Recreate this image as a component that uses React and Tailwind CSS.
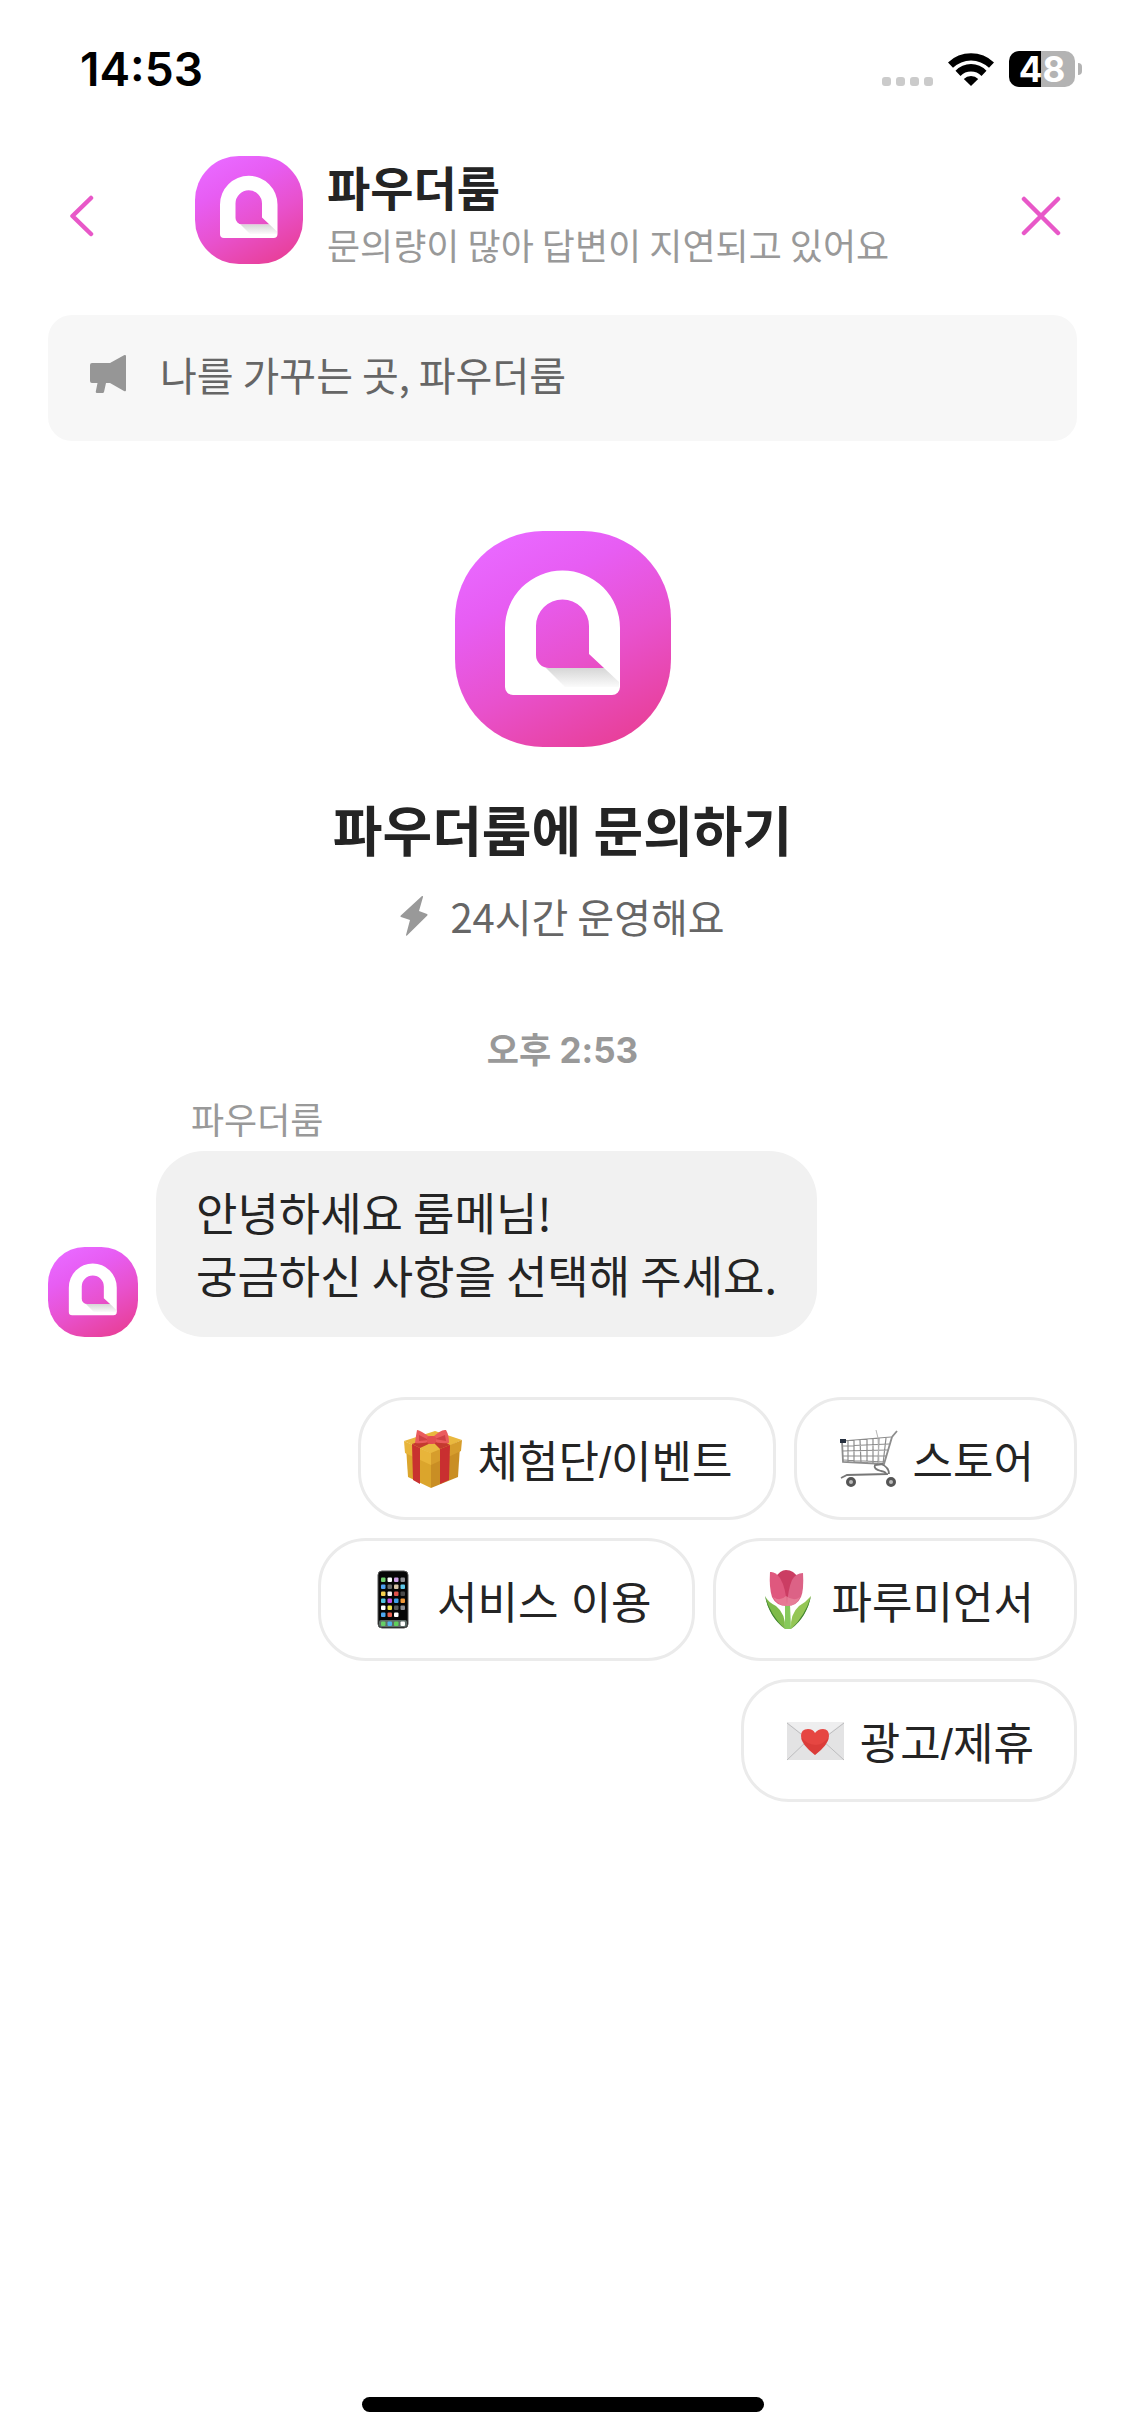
import { useId } from 'react';

const PHONE_APPS = [
  ['#6fcf6b', '#ffffff', '#cf9fe6', '#8e8e93'],
  ['#4f9ff0', '#6b6b6b', '#d8c3a5', '#5fc8e8'],
  ['#f5d04e', '#f2f2f2', '#e0524a', '#4a4a4a'],
  ['#4fc3e0', '#c04fe0', '#3f9fe8', '#f0983a'],
  ['#ffffff', '#f0e04a', '#5a5a5a', '#8e8e93'],
  ['#4fa8f0', '#e8604f', '#ffffff'],
];

const DOCK_APPS = ['#66cf66', '#4fb0ec', '#5fd05a', '#ffffff'];

function Logo({ className }) {
  const id = useId();

  return (
    <svg viewBox="0 0 216 216" className={className} aria-hidden="true">
      <defs>
        <linearGradient id={`${id}-bg`} x1="0.25" y1="0.02" x2="0.75" y2="1">
          <stop offset="0" stopColor="#e968ff" />
          <stop offset="0.25" stopColor="#e75df3" />
          <stop offset="0.6" stopColor="#e851cd" />
          <stop offset="1" stopColor="#e83f98" />
        </linearGradient>
        <linearGradient id={`${id}-shade`} x1="0" y1="0" x2="0" y2="1">
          <stop offset="0" stopColor="#d6d6d6" />
          <stop offset="1" stopColor="#fbfbfb" />
        </linearGradient>
      </defs>
      <rect width="216" height="216" rx="88" fill={`url(#${id}-bg)`} />
      <path
        fill="#fff"
        fillRule="evenodd"
        d="M50 97a57.500 57.500 0 0 1 115 0v59a8 8 0 0 1-8 8H58a8 8 0 0 1-8-8zM81 95v29a13 13 0 0 0 13 13h55l-15-14V95a26.500 26.500 0 0 0-53 0z"
      />
      <path fill={`url(#${id}-shade)`} d="M91 137h58l15 14v5H110z" />
    </svg>
  );
}

function WifiIcon() {
  return (
    <svg viewBox="0 0 46 33" className="h-[33px] w-[46px]" aria-hidden="true">
      <path d="M0 9.500a33 33 0 0 1 46 0l-5 5.300a26 26 0 0 0-36 0z" />
      <path d="M7.500 17.700a21.500 21.500 0 0 1 31 0l-5 5.300a14.600 14.600 0 0 0-21 0z" />
      <path d="M15.800 26a10 10 0 0 1 14.400 0L23 33z" />
    </svg>
  );
}

function StatusBar() {
  return (
    <div className="flex items-center justify-between pt-11 pr-[43px] pl-20">
      <span className="text-[46px] leading-[50px] font-semibold text-black">14:53</span>
      <div className="flex items-center">
        <div className="mr-[15px] flex gap-[5px] pt-[24px]">
          <span className="size-[9px] rounded-[3px] bg-[#cbcbcb]" />
          <span className="size-[9px] rounded-[3px] bg-[#cbcbcb]" />
          <span className="size-[9px] rounded-[3px] bg-[#cbcbcb]" />
          <span className="size-[9px] rounded-[3px] bg-[#cbcbcb]" />
        </div>
        <WifiIcon />
        <div className="ml-[15px] flex h-9 w-[66px] items-center justify-center rounded-[10px] bg-linear-to-r from-black from-48% to-[#b3b3b3] to-48% text-[35px] leading-9 font-bold text-white">
          48
        </div>
        <span className="ml-[3px] h-3 w-1 rounded-r-full bg-[#b3b3b3]" />
      </div>
    </div>
  );
}

function Header() {
  return (
    <header className="flex items-start pt-[62px] pr-16 pl-[69px]">
      <button type="button" aria-label="뒤로" className="mt-[39px] text-[#e858c8]">
        <svg viewBox="0 0 26 42" className="h-[42px] w-[26px]" fill="none" stroke="currentColor" strokeWidth="4.500" strokeLinecap="round" strokeLinejoin="round">
          <path d="M22 3 3.500 21 22 39" />
        </svg>
      </button>
      <Logo className="ml-[100px] size-[108px]" />
      <div className="ml-6 grow">
        <h1 className="text-[47px] leading-[60px] font-bold">파우더룸</h1>
        <p className="text-[36px] leading-[56px] text-[#999]">문의량이 많아 답변이 지연되고 있어요</p>
      </div>
      <button type="button" aria-label="닫기" className="mt-10 text-[#e858c8]">
        <svg viewBox="0 0 40 40" className="size-10" fill="none" stroke="currentColor" strokeWidth="4.500" strokeLinecap="round">
          <path d="m3 3 34 34M37 3 3 37" />
        </svg>
      </button>
    </header>
  );
}

function Notice() {
  return (
    <div className="mx-12 mt-[43px] flex h-[126px] items-center gap-8 rounded-3xl bg-[#f7f7f7] pb-2 pl-[42px]">
      <svg viewBox="0 0 38 38" className="size-[38px]" fill="#969696" aria-hidden="true">
        <path d="M2 8h18L34 0.300q2-1 2 1v33.700q0 2-2 1L20 28h-4l-2 9q-.3 1-1.300 1H7q-1.400 0-1.200-1.400L7.500 28H2q-2 0-2-2V10q0-2 2-2z" />
      </svg>
      <p className="text-[40px] leading-[54px] text-[#666]">나를 가꾸는 곳, 파우더룸</p>
    </div>
  );
}

function GiftIcon() {
  return (
    <svg viewBox="0 0 60 60" className="size-[60px]" aria-hidden="true">
      <path d="M3 18 28 30v29L5 48z" fill="#dba52c" />
      <path d="M28 30 57 17l-2 31-27 11z" fill="#c98e24" />
      <path d="m1 12 31-10 27 9-30 14z" fill="#e9b83f" />
      <path d="M1 12 28 24v12L2 24z" fill="#e8b53a" />
      <path d="m28 24 31-13-1 11-30 14z" fill="#d69d2c" />
      <path d="m9 15 8 4v36l-7-4z" fill="#c8322f" />
      <path d="m37 20 10-4-1 35-9 4z" fill="#c92f30" />
      <path d="M9 15 26 9l6 3-15 7zM29 12l8-2 10 6-10 4z" fill="#c43a2f" />
      <path d="M28 9Q17 1 14 1q-1 5-2 13 9 1 16-2zM29 9Q38 0 43 1q3 5 3 13-10 1-17-2z" fill="#ea5c5d" />
      <path d="m16 6 10 5-10 1zM42 6l-10 4 11 2z" fill="#cf4145" />
      <rect x="24" y="7" width="9" height="8" rx="3" fill="#e24d50" />
    </svg>
  );
}

function CartIcon() {
  return (
    <svg viewBox="0 0 60 60" className="size-[60px]" fill="none" stroke="#8d8d8d" aria-hidden="true">
      <path d="M2 12h1l1 21 41 2L53 8l5-6" strokeWidth="1.800" />
      <path d="M3 12 52 8M3 17l47-2M3 22l46-1M4 27h43M4 31l42 2M9 12v21M15 11v22M21 11l1 23M28 10v24M34 10v24M40 9l-1 26M47 9l-3 26" strokeWidth="1.200" />
      <path d="m37 1 2 8 1 26" stroke="#b5b5b5" />
      <path d="m44 35-8 1q-2 4 6 6 6 1 5 4M42 35q8 3 8 10M2 49l6-3 41-1" stroke="#777" strokeWidth="1.800" />
      <path d="M1 10h6v4H1z" fill="#27303f" stroke="none" />
      <circle cx="12" cy="53" r="3.500" fill="#bbb" stroke="#555" strokeWidth="3" />
      <circle cx="52" cy="53" r="3.500" fill="#bbb" stroke="#555" strokeWidth="3" />
    </svg>
  );
}

function PhoneIcon() {
  return (
    <svg viewBox="0 0 60 60" className="size-[60px]" aria-hidden="true">
      <rect x="15" y="1" width="30" height="57" rx="4" fill="#060606" stroke="#555" />
      {PHONE_APPS.map((row, y) =>
        row.map((color, x) => (
          <rect key={`${x}-${y}`} x={18 + x * 6.5} y={7.5 + y * 7} width="4.500" height="4.500" rx="1" fill={color} />
        ))
      )}
      <rect x="16" y="50" width="28" height="7" rx="2" fill="#5c6b66" />
      {DOCK_APPS.map((color, x) => (
        <rect key={x} x={18 + x * 6.5} y="51.500" width="4.500" height="4.500" rx="1" fill={color} />
      ))}
    </svg>
  );
}

function TulipIcon() {
  return (
    <svg viewBox="0 0 60 60" className="size-[60px]" aria-hidden="true">
      <path d="M27 34h5l1 25h-6z" fill="#86c95c" />
      <path d="M7 26q4 20 20 33 1-15-9-23-8-4-11-10z" fill="#7fbb4a" />
      <path d="M53 26q-4 20-20 33-1-15 8-23 7-4 12-10z" fill="#94c655" />
      <path d="M7 26q6 20 20 33Q11 47 7 26zM53 26Q47 46 33 59 49 47 53 26z" fill="#3f8330" />
      <path d="M17 8Q22 0 28 0q8 0 12 8l-6 26H22z" fill="#cb3d63" />
      <path d="M12 2q5-1 10 6 6 10 7 28-11 0-15-9-3-9-2-25z" fill="#df587e" />
      <path d="M45 3q-7 0-11 7-4 9-5 26 10 0 14-9 3-7 2-24z" fill="#dc6286" />
      <path d="M15 27q7 5 13-1 8 6 14 1-4 9-13 9T15 27z" fill="#ec90a3" opacity="0.6" />
    </svg>
  );
}

function LetterIcon() {
  return (
    <svg viewBox="0 0 60 60" className="size-[60px]" aria-hidden="true">
      <rect x="1" y="11" width="57" height="38" rx="1" fill="#e3e3e4" />
      <path d="m1 11 28 22 29-22z" fill="#eeeeef" />
      <path d="m1 49 21-20 7 5 7-5 22 20M1 12l28 22 29-22" fill="none" stroke="#bdbdbf" />
      <path d="M29 44Q15 33 15 25q0-7 7-7 5 0 7 4 3-4 8-4 6 0 6 7 0 8-14 19z" fill="#e64642" />
      <path d="M29 44Q15 33 15 26q5 7 15 8 8-1 13-8-1 8-14 18z" fill="#cf302f" opacity="0.45" />
    </svg>
  );
}

const OPTIONS = [
  { label: '체험단/이벤트', Icon: GiftIcon },
  { label: '스토어', Icon: CartIcon },
  { label: '서비스 이용', Icon: PhoneIcon },
  { label: '파루미언서', Icon: TulipIcon },
  { label: '광고/제휴', Icon: LetterIcon },
];

function Intro() {
  return (
    <section className="mt-[90px] flex flex-col items-center">
      <Logo className="size-[216px]" />
      <h2 className="mt-[46px] text-[54px] leading-[72px] font-bold">파우더룸에 문의하기</h2>
      <div className="mt-6 flex items-center gap-[22px] text-[#666]">
        <svg viewBox="0 0 28 40" className="h-10 w-7" fill="#999" aria-hidden="true">
          <path d="M22 0q1-.5 1 1l-4 14 8 3q1 .6.300 1.500L7 39.500q-1 .8-1-.5l4-15-9-3q-1-.6-.2-1.500z" />
        </svg>
        <p className="text-[40px] leading-[54px]">24시간 운영해요</p>
      </div>
    </section>
  );
}

function Message() {
  return (
    <section className="mt-[14px] px-12">
      <p className="pl-[143px] text-[36px] leading-[54px] text-[#999]">파우더룸</p>
      <div className="mt-[6px] flex items-end gap-[18px]">
        <Logo className="size-[90px]" />
        <p className="rounded-[48px] bg-[#f1f1f1] px-10 pt-[29px] pb-[31px] text-[45px] leading-[63px]">
          안녕하세요 룸메님!
          <br />
          궁금하신 사항을 선택해 주세요.
        </p>
      </div>
    </section>
  );
}

export default function App() {
  return (
    <div className="flex min-h-screen flex-col bg-white font-[Inter,'Noto_Sans_CJK_KR',sans-serif] text-[#242424]">
      <StatusBar />
      <div className="flex grow flex-col font-['Noto_Sans_CJK_KR',sans-serif]">
        <Header />
        <Notice />
        <main>
          <Intro />
          <p className="mt-20 text-center font-[Inter,'Noto_Sans_CJK_KR',sans-serif] text-[35px] leading-[54px] font-bold text-[#999]">
            오후 2:53
          </p>
          <Message />
          <div className="mt-[60px] ml-auto flex max-w-[860px] flex-wrap justify-end gap-[18px] pr-12">
            {OPTIONS.map(({ label, Icon }) => (
              <button
                key={label}
                type="button"
                className="flex items-center gap-[14px] rounded-[48px] border-3 border-[#ebebeb] py-[23px] pr-10 pl-[42px] font-['Liberation_Sans','Noto_Sans_CJK_KR',sans-serif] text-[44px] leading-[63px]"
              >
                <Icon />
                <span className="pt-2">{label}</span>
              </button>
            ))}
          </div>
        </main>
      </div>
      <div className="mx-auto mb-6 h-[15px] w-[402px] rounded-full bg-black" />
    </div>
  );
}
